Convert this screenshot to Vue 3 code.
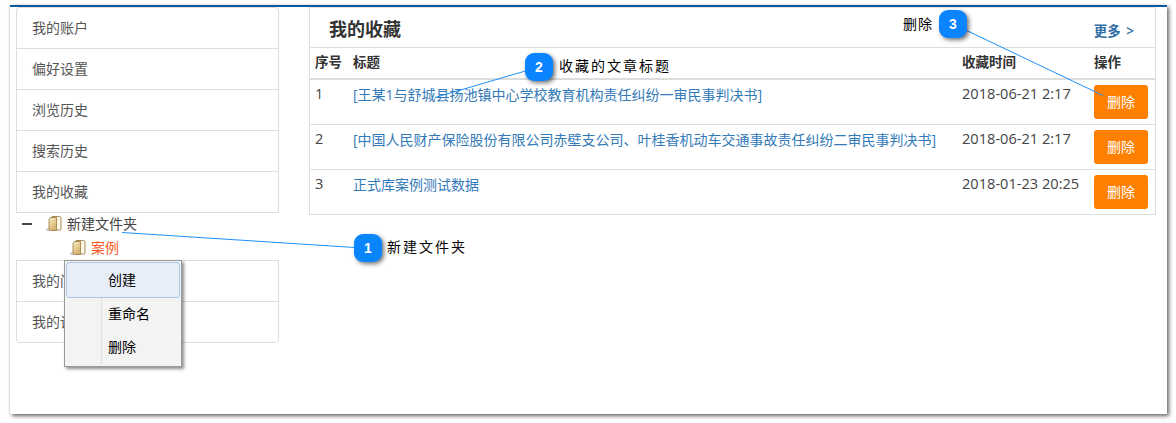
<script setup>
const topNav = ['我的账户', '偏好设置', '浏览历史', '搜索历史', '我的收藏']
const bottomNav = ['我的问答', '我的设置']
const rows = [
  { id: 1, title: '[王某1与舒城县扬池镇中心学校教育机构责任纠纷一审民事判决书]', time: '2018-06-21 2:17' },
  { id: 2, title: '[中国人民财产保险股份有限公司赤壁支公司、叶桂香机动车交通事故责任纠纷二审民事判决书]', time: '2018-06-21 2:17' },
  { id: 3, title: '正式库案例测试数据', time: '2018-01-23 20:25' },
]
</script>

<template>
  <div class="page">
    <div class="card">
      <aside class="side">
        <ul class="nav nav-top">
          <li v-for="n in topNav" :key="n">{{ n }}</li>
        </ul>
        <div class="tree">
          <div class="tree-row">
            <span class="minus"></span>
            <svg class="folder" viewBox="0 0 16 17" width="16" height="17">
              <defs>
                <linearGradient id="fg" x1="0" y1="0" x2="0.5" y2="1">
                  <stop offset="0" stop-color="#fcf0c8" />
                  <stop offset="1" stop-color="#d4b06a" />
                </linearGradient>
              </defs>
              <ellipse cx="3" cy="14.5" rx="3" ry="1.6" fill="#c9c9c9" />
              <path d="M6 1.5h7.5a1.5 1.5 0 0 1 1.5 1.5v11a1 1 0 0 1-1 1H6z" fill="#fdf8e6" stroke="#a98e5c" />
              <path d="M3 14V5.5C3 3 4.5 2.5 6 2.5h4.5V15.5H4.5A1.5 1.5 0 0 1 3 14z" fill="url(#fg)" stroke="#a98e5c" />
            </svg>
            <span class="tree-label">新建文件夹</span>
          </div>
          <div class="tree-row child">
            <svg class="folder" viewBox="0 0 16 17" width="16" height="17">
              <ellipse cx="3" cy="14.5" rx="3" ry="1.6" fill="#c9c9c9" />
              <path d="M6 1.5h7.5a1.5 1.5 0 0 1 1.5 1.5v11a1 1 0 0 1-1 1H6z" fill="#fdf8e6" stroke="#a98e5c" />
              <path d="M3 14V5.5C3 3 4.5 2.5 6 2.5h4.5V15.5H4.5A1.5 1.5 0 0 1 3 14z" fill="url(#fg)" stroke="#a98e5c" />
            </svg>
            <span class="tree-label active">案例</span>
          </div>
        </div>
        <ul class="nav nav-bottom">
          <li v-for="n in bottomNav" :key="n">{{ n }}</li>
        </ul>
      </aside>

      <section class="panel">
        <header class="panel-head">
          <h2>我的收藏</h2>
          <a class="more">更多 &gt;</a>
        </header>
        <table>
          <colgroup>
            <col class="c1" /><col class="c2" /><col class="c3" /><col class="c4" />
          </colgroup>
          <thead>
            <tr><th>序号</th><th>标题</th><th>收藏时间</th><th>操作</th></tr>
          </thead>
          <tbody>
            <tr v-for="r in rows" :key="r.id">
              <td class="num">{{ r.id }}</td>
              <td><a class="link">{{ r.title }}</a></td>
              <td class="time">{{ r.time }}</td>
              <td class="op"><button class="del">删除</button></td>
            </tr>
          </tbody>
        </table>
      </section>
    </div>

    <div class="menu">
      <div class="menu-rule"></div>
      <div class="menu-item hot">创建</div>
      <div class="menu-item">重命名</div>
      <div class="menu-item">删除</div>
    </div>

    <svg class="lines" width="1176" height="423" viewBox="0 0 1176 423">
      <line x1="122" y1="232.5" x2="370" y2="248.5" stroke="#1e90ff" stroke-width="1" />
      <line x1="435" y1="97.5" x2="539" y2="67" stroke="#1e90ff" stroke-width="1" />
      <line x1="953" y1="24" x2="1103" y2="95.5" stroke="#1e90ff" stroke-width="1" />
    </svg>

    <span class="badge b1">1</span>
    <span class="note n1">新建文件夹</span>
    <span class="badge b2">2</span>
    <span class="note n2">收藏的文章标题</span>
    <span class="badge b3">3</span>
    <span class="note n3">删除</span>
  </div>
</template>

<style>
html, body { margin: 0; background: #fff; }
</style>

<style scoped>
.page {
  position: relative;
  width: 1176px;
  height: 423px;
  overflow: hidden;
  background: #fff;
  font-family: "Open Sans", "Noto Sans CJK SC", sans-serif;
  font-size: 14px;
  color: #333;
}
.card {
  box-sizing: border-box;
  position: absolute;
  left: 10px;
  top: 5px;
  width: 1157px;
  height: 409px;
  display: flex;
  gap: 30px;
  padding-left: 6px;
  background: #fff;
  border-top: 2px solid #0b5a9f;
  box-shadow: 2px 2px 4px rgba(0, 0, 0, .6), -1px 0 2px rgba(0, 0, 0, .08);
}
.side { width: 263px; flex: none; }
.nav {
  list-style: none;
  margin: 0;
  padding: 0;
  border: 1px solid #ddd;
  border-bottom: 0;
  color: #555;
}
.nav li {
  box-sizing: border-box;
  height: 41px;
  line-height: 39px;
  padding-left: 15px;
  border-bottom: 1px solid #ddd;
}
.nav-top { border-radius: 4px 4px 0 0; }
.nav-bottom { border-radius: 0 0 4px 4px; overflow: hidden; }
.tree {
  height: 47px;
  box-sizing: border-box;
  display: flex;
  flex-direction: column;
  gap: 1px;
  color: #444;
}
.tree-row {
  box-sizing: border-box;
  height: 23px;
  display: flex;
  align-items: center;
  padding: 0 0 2px 6px;
}
.tree-row.child { padding-left: 54px; }
.minus { width: 10px; height: 2px; background: #444; margin-right: 14px; }
.folder { flex: none; margin-right: 5px; }
.tree-label { line-height: 21px; }
.active { color: #f4581a; }

.panel {
  box-sizing: border-box;
  width: 847px;
  height: 208px;
  border: 1px solid #ddd;
  border-top: 1px solid #e4e4e4;
}
.panel-head {
  height: 40px;
  box-sizing: border-box;
  border-bottom: 1px solid #ddd;
  display: flex;
  align-items: center;
  justify-content: space-between;
  padding: 4px 21px 0 19px;
}
h2 { margin: 0 0 4px; font-size: 18px; font-weight: 700; color: #333; }
.more { color: #2f6ea5; font-weight: 600; font-size: 13.5px; word-spacing: 2px; }
table {
  width: 845px;
  border-collapse: collapse;
  table-layout: fixed;
  line-height: 20px;
}
.c1 { width: 38px; }
.c2 { width: 609px; }
.c3 { width: 132px; }
.c4 { width: 66px; }
th {
  height: 27px;
  padding: 0 0 3px 5px;
  text-align: left;
  font-size: 13.5px;
  font-weight: 700;
  border-bottom: 2px solid #ddd;
  color: #333;
}
td {
  height: 39px;
  padding: 5px 0 0 5px;
  vertical-align: top;
  border-bottom: 1px solid #ddd;
  color: #444;
}
tbody tr:last-child td { border-bottom: 0; }
td.num, td.time { font-size: 14.6px; padding-top: 3px; height: 41px; }
.link { color: #337ab7; white-space: nowrap; }
.del {
  display: block;
  width: 54px;
  height: 34px;
  padding: 0;
  border: 0;
  border-radius: 3px;
  background: #ff8000;
  color: #fff;
  font: inherit;
}

.menu {
  box-sizing: border-box;
  position: absolute;
  left: 64px;
  top: 260px;
  width: 118px;
  height: 107px;
  padding: 1px;
  background: #f3f3f3;
  border: 1px solid #999;
  box-shadow: 2px 2px 3px rgba(0, 0, 0, .45);
  color: #000;
}
.menu-rule {
  position: absolute;
  left: 36px;
  top: 2px;
  bottom: 2px;
  width: 1px;
  background: #e0e0e0;
}
.menu-item {
  position: relative;
  box-sizing: border-box;
  height: 33px;
  line-height: 31px;
  padding-left: 42px;
}
.menu-item.hot {
  height: 36px;
  line-height: 34px;
  background: #e7eef7;
  border: 1px solid #a9c9e2;
  border-radius: 3px;
  padding-left: 41px;
}
.lines { position: absolute; left: 0; top: 0; pointer-events: none; }
.badge {
  position: absolute;
  width: 28px;
  height: 28px;
  border-radius: 9px;
  background: #0a84ff;
  color: #fff;
  font-family: "Liberation Sans", sans-serif;
  font-weight: 700;
  font-size: 14px;
  line-height: 28px;
  text-align: center;
  box-shadow: 2px 2px 4px rgba(0, 0, 0, .55);
}
.b1 { left: 354px; top: 234px; }
.b2 { left: 525px; top: 53px; }
.b3 { left: 939px; top: 10px; }
.note {
  position: absolute;
  color: #000;
  letter-spacing: 2px;
  line-height: 20px;
  white-space: nowrap;
}
.n1 { left: 387px; top: 237px; }
.n2 { left: 559px; top: 56px; }
.n3 { left: 903px; top: 14px; letter-spacing: 1px; }
</style>
